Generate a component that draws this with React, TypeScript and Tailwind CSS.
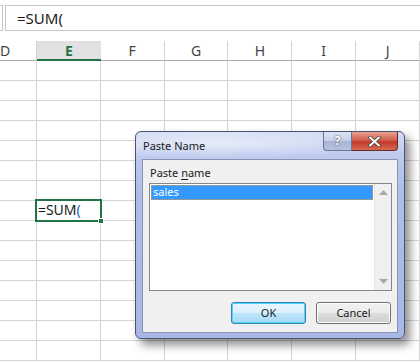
import React from 'react';

const columns = ['E', 'F', 'G', 'H', 'I', 'J'];
const rowCount = 15;

function ScrollArrow({ up }: { up?: boolean }) {
  return (
    <svg width="9" height="5" viewBox="0 0 9 5">
      <path d={up ? 'M0 5 L4.5 0 L9 5 Z' : 'M0 0 L4.5 5 L9 0 Z'} fill="#a8a8a8" />
    </svg>
  );
}

function PasteNameDialog() {
  return (
    <div
      className="absolute left-[135px] top-[131px] w-[270px] h-[208px] rounded-[6px] border border-[#4a5470] shadow-[5px_6px_10px_rgba(0,0,0,0.45)] bg-[linear-gradient(180deg,#d3dcf3_0%,#bccaef_12%,#aebde9_30%,#a9b7e6_100%)]"
      style={{ fontFamily: '"Noto Sans", "Open Sans", sans-serif' }}
    >
      {/* title bar */}
      <div className="absolute inset-x-0 top-0 h-[28px] rounded-t-[6px] bg-[radial-gradient(ellipse_at_30%_40%,rgba(255,255,255,0.55),rgba(255,255,255,0)_65%)]" />
      <div className="absolute left-[7px] top-[6px] text-[11px] leading-[16px] text-[#1a1a1a]">Paste Name</div>
      <div className="absolute right-[6px] top-0 flex">
        <div className="w-[29px] h-[19px] rounded-bl-[4px] border border-t-0 border-[#6b7592] bg-[linear-gradient(180deg,#dde4f4_0%,#c3cde6_50%,#a8b4d2_51%,#b7c2de_100%)] flex items-center justify-center text-[12px] font-bold text-white [text-shadow:0_0_2px_#333]">
          ?
        </div>
        <div className="w-[46px] h-[19px] rounded-br-[4px] border border-t-0 border-l-0 border-[#6b2a24] bg-[linear-gradient(180deg,#e8a090_0%,#d2604d_45%,#c2392a_55%,#d86a52_100%)] flex items-center justify-center">
          <svg width="13" height="11" viewBox="0 0 13 11">
            <path d="M2 1.5 L11 9.5 M11 1.5 L2 9.5" stroke="#3d3d3d" strokeWidth="3.4" strokeLinecap="round" />
            <path d="M2 1.5 L11 9.5 M11 1.5 L2 9.5" stroke="#ffffff" strokeWidth="2" strokeLinecap="round" />
          </svg>
        </div>
      </div>

      {/* client area */}
      <div className="absolute left-[6px] top-[27px] w-[256px] h-[174px] bg-[#f0f0f0] border border-[#8a94b0] flex flex-col">
        <div className="ml-[7px] mt-[5px] text-[11px] leading-[16px] text-[#1a1a1a]">
          Paste <span className="underline underline-offset-2">n</span>ame
        </div>
        <div className="ml-[6px] mt-[2px] w-[243px] h-[108px] border border-[#828790] bg-white flex">
          <div className="flex-1 p-[1px]">
            <div className="h-[15px] bg-[#3399ff] border border-dotted border-[#e89a3c] text-white text-[11px] leading-[12px] pl-[1px]">
              sales
            </div>
          </div>
          <div className="w-[17px] bg-[#f0f0f0] flex flex-col items-center justify-between py-[6px] border-l border-[#e6e6e6]">
            <ScrollArrow up />
            <ScrollArrow />
          </div>
        </div>
        <div className="flex justify-end gap-[10px] mt-[11px] mr-[6px]">
          <button className="w-[75px] h-[22px] rounded-[3px] border border-[#3c7fb1] shadow-[inset_0_0_0_1px_#48d8fb] bg-[linear-gradient(180deg,#eaf6fd_0%,#d9f0fc_50%,#bee6fd_51%,#a7d9f5_100%)] text-[11px] text-[#1a1a1a]">
            OK
          </button>
          <button className="w-[75px] h-[22px] rounded-[3px] border border-[#707070] shadow-[inset_0_0_0_1px_#fcfcfc] bg-[linear-gradient(180deg,#f2f2f2_0%,#ebebeb_50%,#dddddd_51%,#cfcfcf_100%)] text-[11px] text-[#1a1a1a]">
            Cancel
          </button>
        </div>
      </div>
    </div>
  );
}

export default function App() {
  return (
    <div
      className="relative w-[420px] h-[361px] overflow-hidden bg-white"
      style={{ fontFamily: '"Noto Sans", "Open Sans", sans-serif' }}
    >
      {/* formula bar */}
      <div className="h-[40px] flex items-start pt-[5px]">
        <div className="w-[3px] h-[26px] border-y border-r border-[#c6c6c6]" />
        <div className="ml-[2px] flex-1 h-[26px] border border-r-0 border-[#c6c6c6] pl-[11px] text-[15px] leading-[24px] text-[#1a1a1a]">
          =SUM(
        </div>
      </div>

      {/* column headers */}
      <div className="flex h-[21px] border-b border-[#ababab] text-[14px] text-[#444444]">
        <div className="w-[37px] h-[20px] mt-px border-r border-[#d4d4d4] leading-[20px]">D</div>
        {columns.map((c) => (
          <div
            key={c}
            className={
              c === 'E'
                ? 'w-[64px] h-[20px] mt-px text-center leading-[19px] bg-[#e1e1e1] border-b-2 border-[#217346] text-[#217346] font-bold relative -mb-px'
                : 'w-[64px] h-[20px] mt-px text-center leading-[20px] border-r border-[#d4d4d4]'
            }
          >
            {c}
          </div>
        ))}
      </div>

      {/* grid */}
      {Array.from({ length: rowCount }).map((_, r) => (
        <div key={r} className="flex h-[20px] border-b border-[#d4d4d4]">
          <div className="w-[37px] border-r border-[#d4d4d4]" />
          {columns.map((c) => (
            <div key={c} className="w-[64px] border-r border-[#d4d4d4] relative">
              {c === 'E' && r === 7 && (
                <div className="absolute -left-[2px] -top-[2px] w-[67px] h-[23px] border-2 border-[#217346] text-[14px] leading-[18px] pl-[1px] text-[#1a1a1a] z-10 bg-white">
                  =SUM<span className="text-[#1f5fb8]">(</span>
                  <div className="absolute -right-[4px] -bottom-[4px] w-[6px] h-[6px] bg-[#217346] border border-white" />
                </div>
              )}
            </div>
          ))}
        </div>
      ))}

      <PasteNameDialog />
    </div>
  );
}
